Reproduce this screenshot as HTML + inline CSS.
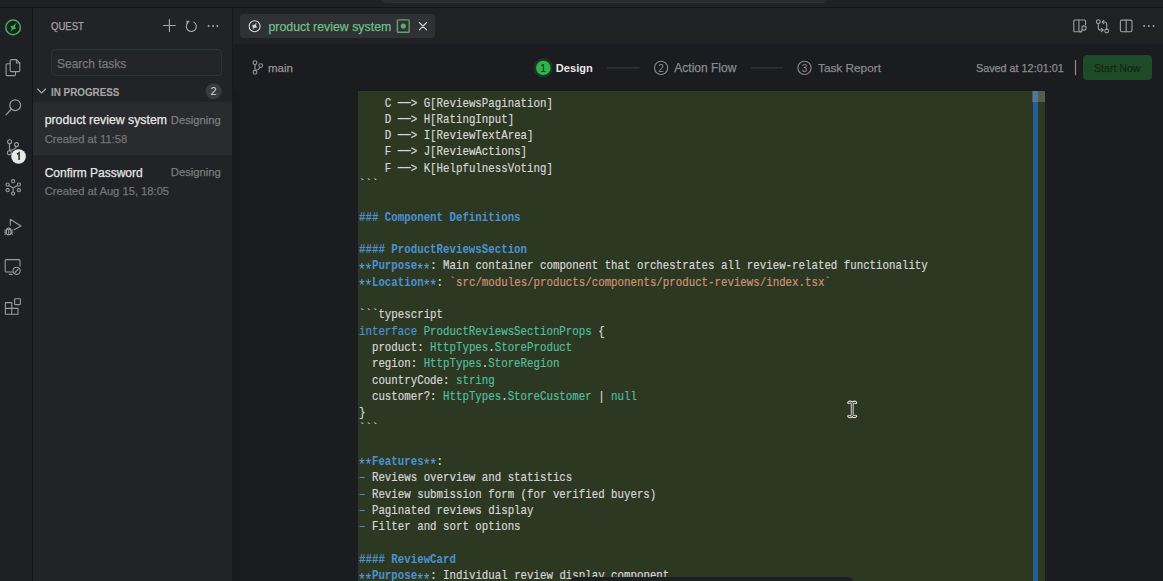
<!DOCTYPE html>
<html><head><meta charset="utf-8">
<style>
*{margin:0;padding:0;box-sizing:border-box}
html,body{width:1163px;height:581px;overflow:hidden;background:#1b1c1f;font-family:"Liberation Sans",sans-serif}
.abs{position:absolute}
.t{position:absolute;white-space:pre;line-height:1;-webkit-text-stroke:0.25px currentColor}
#top{left:0;top:0;width:1163px;height:8px;background:#202123;border-bottom:1px solid #141517}
#cmd{left:381px;top:-8px;width:447px;height:11px;background:#292c2f;border-radius:5px;border:1px solid #2d3033}
#act{left:0;top:8px;width:33px;height:573px;background:#1f2023;border-right:1px solid #151618}
#side{left:33px;top:8px;width:200px;height:573px;background:#222326;border-right:1px solid #18191b}
#shadow{left:233px;top:92px;width:12px;height:489px;background:linear-gradient(to right,rgba(0,0,0,0.14),rgba(0,0,0,0))}
#tabbar{left:233px;top:8px;width:930px;height:36px;background:#202123}
#toolbar{left:233px;top:44px;width:930px;height:48px;background:#1b1c1f}
#search{left:51px;top:49px;width:171px;height:27px;background:#232528;border:1px solid #2c3436;border-radius:4px}
#sel{left:33px;top:102px;width:199px;height:53px;background:#2a2b2e}
#tab{left:240px;top:14px;width:195px;height:24px;background:#303134;border-radius:4px}
#btn{left:1083px;top:55px;width:69px;height:25px;background:#1f4a28;border-radius:4px}
#code{left:358px;top:91px;width:687px;height:490px;background:#2d3822}
#sb{left:1033px;top:91px;width:5px;height:490px;background:#225d96}
#sbt{left:1032px;top:91px;width:13px;height:11px;background:rgba(190,195,185,0.28)}
#bot{left:570px;top:577px;width:283px;height:12px;background:#1d1e20;border-radius:5px}
#codetext{-webkit-text-stroke:0.2px currentColor;left:359px;top:95.5px;font-family:"Liberation Mono",monospace;font-size:12.4px;letter-spacing:0px;line-height:16.29px;transform:scaleX(0.8692);transform-origin:0 0;color:#d6d6d6;white-space:pre}
.b{color:#4b91d2;font-weight:bold;-webkit-text-stroke:0}
.bl{color:#4b91d2}
.or{color:#cf9276}
.tl{color:#52bd9e}
.ar{position:relative;top:-1px;font-weight:bold;-webkit-text-stroke:0}
.as{position:relative;top:5.4px;left:-1.3px;color:#5a9fde;font-size:16px;letter-spacing:-2.16px;line-height:10px;font-weight:400;-webkit-text-stroke:0}
svg{position:absolute;left:0;top:0}
</style></head><body>
<div id="top" class="abs"></div>
<div id="cmd" class="abs"></div>
<div id="act" class="abs"></div>
<div id="side" class="abs"></div>
<div id="tabbar" class="abs"></div>
<div id="shadow" class="abs"></div>
<div id="toolbar" class="abs"></div>
<div id="search" class="abs"></div>
<div id="sel" class="abs"></div>
<div id="tab" class="abs"></div>
<div id="btn" class="abs"></div>
<div id="code" class="abs"></div>
<div id="sb" class="abs"></div>
<div id="sbt" class="abs"></div>
<div id="codetext" class="abs">    C <span class="ar">&mdash;&mdash;</span>> G[ReviewsPagination]
    D <span class="ar">&mdash;&mdash;</span>> H[RatingInput]
    D <span class="ar">&mdash;&mdash;</span>> I[ReviewTextArea]
    F <span class="ar">&mdash;&mdash;</span>> J[ReviewActions]
    F <span class="ar">&mdash;&mdash;</span>> K[HelpfulnessVoting]
```

<span class="b">### Component Definitions</span>

<span class="b">#### ProductReviewsSection</span>
<span class="b"><span class="as">**</span>Purpose<span class="as">**</span></span>: Main container component that orchestrates all review-related functionality
<span class="b"><span class="as">**</span>Location<span class="as">**</span></span>: <span class="or">`src/modules/products/components/product-reviews/index.tsx`</span>

```typescript
<span class="bl">interface</span> <span class="tl">ProductReviewsSectionProps</span> {
  product: <span class="tl">HttpTypes</span>.<span class="tl">StoreProduct</span>
  region: <span class="tl">HttpTypes</span>.<span class="tl">StoreRegion</span>
  countryCode: <span class="tl">string</span>
  customer?: <span class="tl">HttpTypes</span>.<span class="tl">StoreCustomer</span> | <span class="tl">null</span>
}
```

<span class="b"><span class="as">**</span>Features<span class="as">**</span></span>:
<span class="bl">&ndash;</span> Reviews overview and statistics
<span class="bl">&ndash;</span> Review submission form (for verified buyers)
<span class="bl">&ndash;</span> Paginated reviews display
<span class="bl">&ndash;</span> Filter and sort options

<span class="b">#### ReviewCard</span>
<span class="b"><span class="as">**</span>Purpose<span class="as">**</span></span>: Individual review display component
</div>
<div id="bot" class="abs"></div>
<div class="t" style="left:50.80px;top:21.46px;font-size:10.75px;color:#a3a3a3;font-weight:400;font-family:'Liberation Sans',sans-serif;transform:scaleX(0.89);transform-origin:0 0;">QUEST</div>
<div class="t" style="left:57.00px;top:57.90px;font-size:12px;color:#767779;font-weight:400;font-family:'Liberation Sans',sans-serif;">Search tasks</div>
<div class="t" style="left:51.00px;top:86.76px;font-size:10.75px;color:#a6a6a6;font-weight:700;font-family:'Liberation Sans',sans-serif;transform:scaleX(0.915);transform-origin:0 0;-webkit-text-stroke:0.1px currentColor;">IN PROGRESS</div>
<div class="t" style="left:44.70px;top:113.94px;font-size:12.3px;color:#e6e6e6;font-weight:400;font-family:'Liberation Sans',sans-serif;">product review system</div>
<div class="t" style="right:942.20px;top:114.84px;font-size:11.25px;color:#7c7c7e;font-weight:400;font-family:'Liberation Sans',sans-serif;">Designing</div>
<div class="t" style="left:44.70px;top:133.78px;font-size:11.2px;color:#747476;font-weight:400;font-family:'Liberation Sans',sans-serif;">Created at 11:58</div>
<div class="t" style="left:44.70px;top:166.60px;font-size:12px;color:#e6e6e6;font-weight:400;font-family:'Liberation Sans',sans-serif;">Confirm Password</div>
<div class="t" style="right:942.20px;top:167.24px;font-size:11.25px;color:#7c7c7e;font-weight:400;font-family:'Liberation Sans',sans-serif;">Designing</div>
<div class="t" style="left:44.70px;top:186.08px;font-size:11.2px;color:#747476;font-weight:400;font-family:'Liberation Sans',sans-serif;">Created at Aug 15, 18:05</div>
<div class="t" style="left:268.50px;top:20.90px;font-size:12.35px;color:#6cbf80;font-weight:400;font-family:'Liberation Sans',sans-serif;">product review system</div>
<div class="t" style="left:268.00px;top:63.12px;font-size:11.5px;color:#959597;font-weight:400;font-family:'Liberation Sans',sans-serif;">main</div>
<div class="t" style="left:555.80px;top:62.96px;font-size:11.1px;color:#e8e8e8;font-weight:700;font-family:'Liberation Sans',sans-serif;-webkit-text-stroke:0;">Design</div>
<div class="t" style="left:674.30px;top:62.40px;font-size:12px;color:#8a8a8c;font-weight:400;font-family:'Liberation Sans',sans-serif;">Action Flow</div>
<div class="t" style="left:818.00px;top:62.57px;font-size:11.8px;color:#8a8a8c;font-weight:400;font-family:'Liberation Sans',sans-serif;">Task Report</div>
<div class="t" style="left:976.00px;top:63.22px;font-size:10.8px;color:#8c8c8e;font-weight:400;font-family:'Liberation Sans',sans-serif;">Saved at 12:01:01</div>
<div class="t" style="left:1094.00px;top:63.09px;font-size:10.6px;color:#0e2a14;font-weight:400;font-family:'Liberation Sans',sans-serif;">Start Now</div>

<svg width="1163" height="581" viewBox="0 0 1163 581" fill="none" stroke-linecap="round" stroke-linejoin="round">
 <!-- activity: quest logo -->
 <circle cx="13.1" cy="27.4" r="7.3" stroke="#45ad5c" stroke-width="1.5"/>
 <path d="M15.90 23.60 Q13.80 27.22 15.90 28.80 Q13.28 27.99 10.70 31.30 Q12.75 27.73 10.60 26.20 Q13.27 26.96 15.90 23.60 Z" fill="#2ec14f" stroke="#2ec14f" stroke-width="0.3"/>
 <!-- files -->
 <g stroke="#9a9a9c" stroke-width="1.1">
  <path d="M11.2 59.6 H16.4 L19.8 63 V70.6 a1 1 0 0 1 -1 1 H11.2 a1 1 0 0 1 -1-1 V60.6 a1 1 0 0 1 1-1 Z"/>
  <path d="M16.4 59.6 V63 H19.8"/>
  <path d="M10.2 63.8 H7.1 a1 1 0 0 0 -1 1 V74.6 a1 1 0 0 0 1 1 H14.5 a1 1 0 0 0 1-1 V71.6"/>
 </g>
 <!-- search -->
 <g stroke="#9a9a9c" stroke-width="1.2">
  <circle cx="15.2" cy="105.2" r="5.4"/>
  <path d="M11.4 109 L6 114.8"/>
 </g>
 <!-- source control -->
 <g stroke="#9a9a9c" stroke-width="1.1">
  <circle cx="9.6" cy="141.7" r="2"/>
  <circle cx="16.5" cy="144.6" r="2"/>
  <circle cx="9.4" cy="152.7" r="2"/>
  <path d="M9.5 143.7 V150.7"/>
  <path d="M16.3 146.6 Q15.6 149.4 10.2 150.4"/>
 </g>
 <circle cx="18.6" cy="156.5" r="7.3" fill="#e8e8e8"/>
 <path d="M17 154.2 L19.1 152.8 V160" stroke="#3a3a3a" stroke-width="1.7" stroke-linecap="butt" stroke-linejoin="miter" fill="none"/>
 <!-- graph -->
 <g stroke="#9a9a9c" stroke-width="1.1">
  <circle cx="13.1" cy="181.2" r="1.6"/>
  <circle cx="7.6" cy="184.6" r="1.6"/>
  <circle cx="18.9" cy="184.6" r="1.6"/>
  <circle cx="7.6" cy="190.2" r="1.6"/>
  <circle cx="18.9" cy="190.2" r="1.6"/>
  <circle cx="13.1" cy="193.6" r="1.6"/>
  <path d="M9 185.5 L13.1 188 L17.5 185.5 M13.1 188 V192"/>
 </g>
 <!-- run debug -->
 <g stroke="#9a9a9c" stroke-width="1.1">
  <path d="M10.3 225.2 V219.3 L21 226 L14.2 229.8"/>
  <ellipse cx="8.7" cy="231.9" rx="2.5" ry="2.8"/>
  <path d="M6.7 229 Q8.7 226.9 10.7 229"/>
  <path d="M4.9 229.9 L6.2 230.5 M4.6 232.1 H6.1 M4.9 234.3 L6.2 233.6 M12.5 229.9 L11.2 230.5 M12.8 232.1 H11.3 M12.5 234.3 L11.2 233.6 M8.7 230 V234.5"/>
 </g>
 <!-- remote -->
 <g stroke="#9a9a9c" stroke-width="1.1">
  <path d="M12.6 272 H6.2 a1 1 0 0 1 -1-1 V260.6 a1 1 0 0 1 1-1 H19 a1 1 0 0 1 1 1 V266"/>
  <path d="M9.3 274.4 H12"/>
  <circle cx="16.6" cy="270.8" r="3.6"/>
  <path d="M15 272.4 L18.2 269.2"/>
 </g>
 <!-- extensions -->
 <g stroke="#9a9a9c" stroke-width="1.1">
  <path d="M5.4 302.6 H11.8 V314.2 H5.4 Z M5.4 308.4 H18 V314.2 H11.8"/>
  <rect x="14.6" y="298.8" width="5.8" height="5.8" rx="0.8"/>
 </g>
 <!-- sidebar header icons -->
 <g stroke="#a8a8aa" stroke-width="1.1">
  <path d="M169.4 19.6 V31.4 M163.5 25.5 H175.3"/>
  <path d="M193.85 22.12 A5 5 0 1 1 187.81 22.91"/>
 </g>
 <path d="M186.8 20.9 L189.5 21.2 L187.1 23.6 Z" fill="#a8a8aa" stroke="#a8a8aa" stroke-width="0.5" stroke-linejoin="round"/>
 <g fill="#a8a8aa">
  <circle cx="208.6" cy="26.1" r="1"/><circle cx="213.1" cy="26.1" r="1"/><circle cx="217.4" cy="26.1" r="1"/>
 </g>
 <!-- chevron in progress -->
 <path d="M37.6 89 L41.6 93 L45.6 89" stroke="#a6a6a6" stroke-width="1.1"/>
 <circle cx="213.6" cy="91.2" r="8" fill="#3a3b3e"/>
 <text x="213.6" y="95.3" font-family="Liberation Sans" font-size="11" fill="#d6d6d6" text-anchor="middle">2</text>
 <!-- tab icon -->
 <g stroke="#d8d8d8" stroke-width="1.1">
  <circle cx="254.6" cy="26.2" r="5.5"/>
 </g>
 <path d="M256.10 23.40 Q255.18 26.00 256.90 27.40 Q254.61 27.00 252.80 29.10 Q253.77 26.65 252.10 25.40 Q254.34 25.65 256.10 23.40 Z" fill="#e0e0e0" stroke="#e0e0e0" stroke-width="0.4"/>
 <rect x="397.4" y="19.9" width="11.8" height="12.4" rx="0.8" stroke="#64a073" stroke-width="1.4"/>
 <circle cx="403.3" cy="26.1" r="2.6" fill="#5ea86f"/>
 <path d="M419.3 22.5 L426.6 29.8 M426.6 22.5 L419.3 29.8" stroke="#d6d6d6" stroke-width="1.1"/>
 <!-- tab bar right icons -->
 <g stroke="#a0a0a2" stroke-width="1.1">
  <path d="M1082 31.8 H1074.8 a1 1 0 0 1 -1-1 V21 a1 1 0 0 1 1-1 H1084.6 a1 1 0 0 1 1 1 V24.6"/>
  <path d="M1078.9 20 V31.8"/>
  <circle cx="1084" cy="28" r="2.1"/>
  <path d="M1082.3 29.8 L1080.4 32"/>
  <circle cx="1098.3" cy="21.7" r="1.9"/>
  <circle cx="1106.7" cy="31" r="1.9"/>
  <path d="M1098.3 23.6 V28 Q1098.3 30 1100.3 30 H1103"/>
  <path d="M1101.4 28.3 L1103.2 30 L1101.4 31.7"/>
  <path d="M1106.7 29.1 V24 Q1106.7 22 1104.7 22 H1102.2"/>
  <path d="M1103.9 20.3 L1102.2 22 L1103.9 23.7"/>
  <rect x="1120.4" y="20.1" width="11.6" height="11.7" rx="1.2"/>
  <path d="M1126.2 20.1 V31.8"/>
 </g>
 <g fill="#a0a0a2">
  <circle cx="1144.2" cy="25.9" r="1"/><circle cx="1148.8" cy="25.9" r="1"/><circle cx="1153.5" cy="25.9" r="1"/>
 </g>
 <!-- branch icon -->
 <g stroke="#959597" stroke-width="1.1">
  <circle cx="255" cy="62.7" r="1.9"/>
  <circle cx="255" cy="72.3" r="1.9"/>
  <circle cx="260.7" cy="65.6" r="1.9"/>
  <path d="M255 64.6 V70.4"/>
  <path d="M260 67.4 Q259 69.4 255.6 70.6"/>
 </g>
 <!-- steps -->
 <circle cx="543.3" cy="67.9" r="9.6" fill="#1d3822"/>
 <circle cx="543.3" cy="67.9" r="7.2" fill="#2db44e"/>
 <text x="543.1" y="71.9" font-family="Liberation Sans" font-size="10.5" fill="#10331a" text-anchor="middle">1</text>
 <path d="M607.5 67.8 H639.2 M751 67.8 H782.6" stroke="#34383d" stroke-width="1.2"/>
 <circle cx="661.1" cy="67.9" r="6.6" stroke="#8a8a8c" stroke-width="1.1"/>
 <text x="661.1" y="71.6" font-family="Liberation Sans" font-size="10" fill="#8a8a8c" text-anchor="middle">2</text>
 <circle cx="804.5" cy="67.9" r="6.6" stroke="#8a8a8c" stroke-width="1.1"/>
 <text x="804.5" y="71.6" font-family="Liberation Sans" font-size="10" fill="#8a8a8c" text-anchor="middle">3</text>
 <path d="M1075.5 60.5 V74.8" stroke="#8a8a8c" stroke-width="1.2"/>
 <!-- I-beam cursor -->
 <path d="M848.6 402.6 Q850.6 401.2 852.2 403.2 Q853.8 401.2 855.8 402.6 M852.2 403.2 V415.6 M848.6 416.2 Q850.6 417.6 852.2 415.6 Q853.8 417.6 855.8 416.2" stroke="#e8e8e8" stroke-width="2.8"/>
 <path d="M848.6 402.6 Q850.6 401.2 852.2 403.2 Q853.8 401.2 855.8 402.6 M852.2 403.2 V415.6 M848.6 416.2 Q850.6 417.6 852.2 415.6 Q853.8 417.6 855.8 416.2" stroke="#1a1a1a" stroke-width="0.9"/>
</svg>
</body></html>
